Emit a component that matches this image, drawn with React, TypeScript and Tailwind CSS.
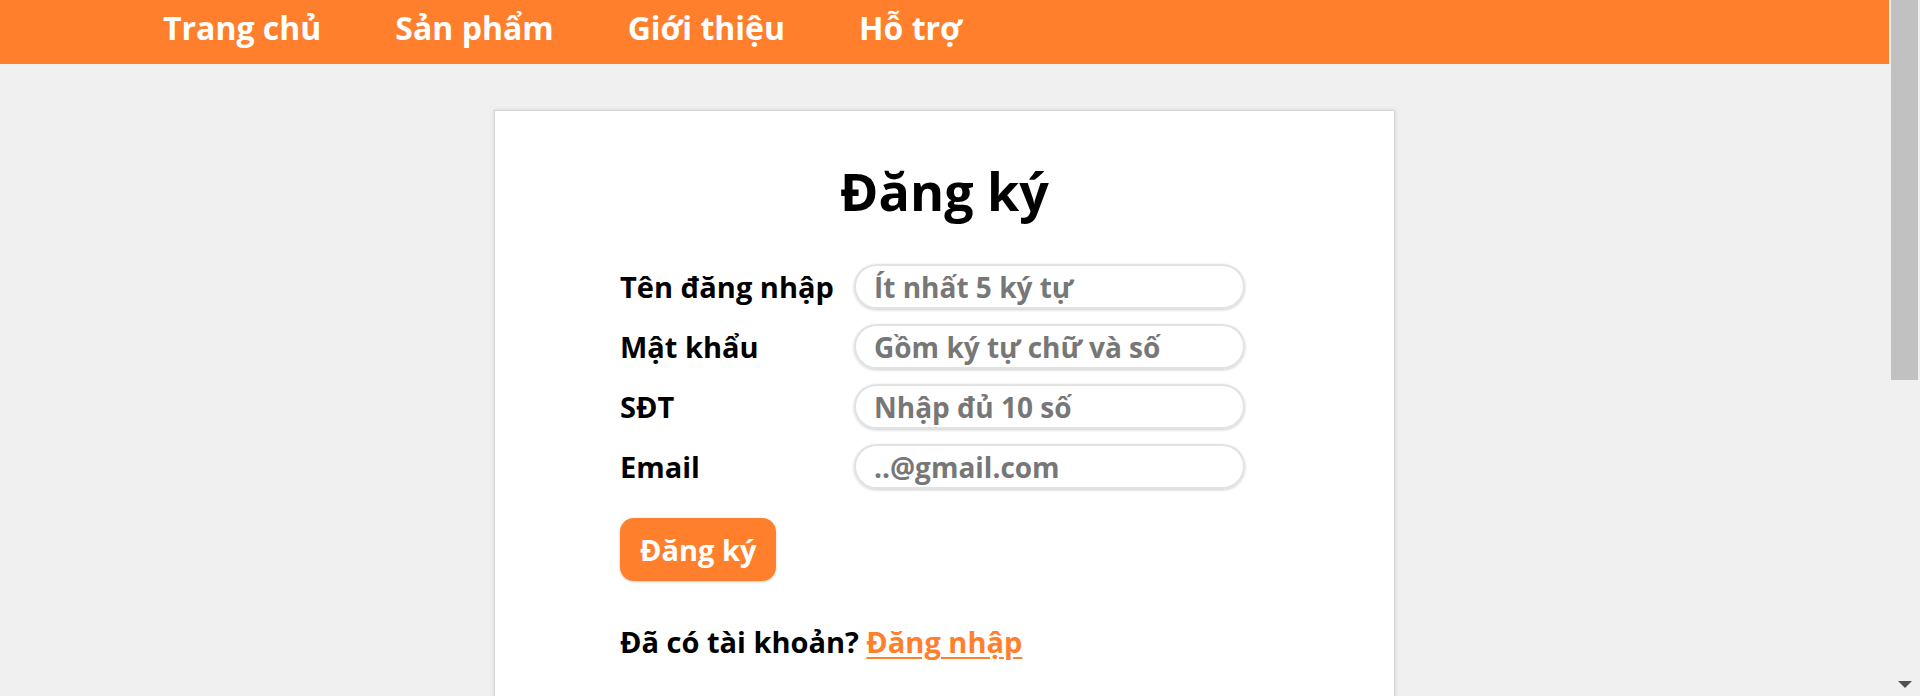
import { useState } from "react"

const navLinks = ["Trang chủ", "Sản phẩm", "Giới thiệu", "Hỗ trợ"]

const fields = [
  { label: "Tên đăng nhập", name: "username", type: "text", placeholder: "Ít nhất 5 ký tự" },
  { label: "Mật khẩu", name: "password", type: "password", placeholder: "Gồm ký tự chữ và số" },
  { label: "SĐT", name: "phone", type: "tel", placeholder: "Nhập đủ 10 số" },
  { label: "Email", name: "email", type: "email", placeholder: "..@gmail.com" },
]

function TopNav() {
  return (
    <nav className="h-16 shrink-0 bg-[#ff7f2c]">
      <ul className="flex items-start gap-[74px] pl-[163px] pt-[5px]">
        {navLinks.map((item) => (
          <li key={item}>
            <a href="#" className="block text-[32px] font-bold leading-[45px] text-white">
              {item}
            </a>
          </li>
        ))}
      </ul>
    </nav>
  )
}

function RegisterCard() {
  const [values, setValues] = useState<Record<string, string>>({})

  return (
    <section className="mx-auto mt-[46px] w-[901px] border border-[#d4d4d4] bg-white pb-20 pt-[50px] shadow-[0_0_4px_rgba(0,0,0,0.12)]">
      <h1 className="text-center text-[52px] font-bold leading-[60px] text-black">Đăng ký</h1>

      <form className="mt-[43px] pl-[125px]" onSubmit={(e) => e.preventDefault()}>
        <div className="grid grid-cols-[234px_391px] items-center gap-y-[15px]">
          {fields.map((field) => (
            <div key={field.name} className="contents">
              <label htmlFor={field.name} className="text-[29px] font-bold leading-none text-black">
                {field.label}
              </label>
              <input
                id={field.name}
                name={field.name}
                type={field.type}
                placeholder={field.placeholder}
                value={values[field.name] ?? ""}
                onChange={(e) => setValues({ ...values, [field.name]: e.target.value })}
                className="h-[45px] w-full rounded-full border-2 border-[#e2e2e2] px-[18px] text-[28px] font-bold text-black shadow-[0_1px_3px_rgba(0,0,0,0.2)] outline-none placeholder:text-[#777]"
              />
            </div>
          ))}
        </div>

        <button
          type="submit"
          className="mt-[29px] h-[63px] rounded-[14px] bg-[#ff7f2c] px-5 text-[29px] font-bold text-white shadow-[0_1px_3px_rgba(0,0,0,0.2)]"
        >
          Đăng ký
        </button>

        <p className="mt-10 text-[29px] font-bold leading-[42px] text-black">
          Đã có tài khoản?{" "}
          <a href="#" className="text-[#ff7f2c] underline decoration-2 underline-offset-4">
            Đăng nhập
          </a>
        </p>
      </form>
    </section>
  )
}

function FakeScrollbar() {
  return (
    <aside className="flex w-[31px] shrink-0 flex-col bg-[#f0f0f0] px-[2px]">
      <div className="h-[380px] bg-[#c1c1c1]" />
      <div className="flex-1" />
      <div className="flex h-6 items-center justify-center">
        <div className="h-0 w-0 border-x-[7px] border-t-[7px] border-x-transparent border-t-[#505050]" />
      </div>
    </aside>
  )
}

export default function App() {
  return (
    <div
      className="flex h-[696px] overflow-hidden bg-[#f0f0f0]"
      style={{ fontFamily: '"Open Sans", "Noto Sans", sans-serif' }}
    >
      <main className="flex min-w-0 flex-1 flex-col">
        <TopNav />
        <RegisterCard />
      </main>
      <FakeScrollbar />
    </div>
  )
}
